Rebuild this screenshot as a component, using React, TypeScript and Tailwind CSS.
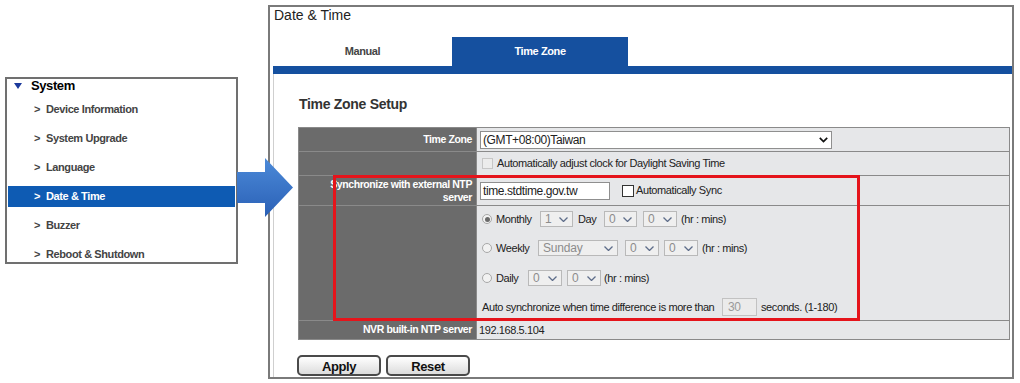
import React from 'react';

const menu = ['Device Information', 'System Upgrade', 'Language', 'Date & Time', 'Buzzer', 'Reboot & Shutdown'];

function Sel({ className, value }: { className: string; value: string }) {
  return (
    <div className={`relative h-[16px] border border-[#b9b9b9] bg-[#efefef] flex items-center pl-[4px] text-[12px] tracking-[-0.2px] text-[#8c8c8c] ${className}`}>
      <span>{value}</span>
      <svg className="absolute right-[4px] top-[5px]" width="9" height="5" viewBox="0 0 9 5">
        <path d="M0.5 0.5l4 4 4-4" stroke="#5e6d8a" strokeWidth="1.3" fill="none" />
      </svg>
    </div>
  );
}

function Radio({ checked }: { checked?: boolean }) {
  return (
    <span className="w-[10px] h-[10px] rounded-full border border-[#a8a8a8] bg-[#f2f2f2] flex items-center justify-center shrink-0">
      {checked && <span className="w-[5px] h-[5px] rounded-full bg-[#6a6a6a]" />}
    </span>
  );
}

export default function App() {
  return (
    <div className="w-[1020px] h-[383px] bg-white relative flex items-start overflow-hidden font-['Liberation_Sans',Arial,sans-serif] text-[#222]">
      {/* sidebar */}
      <div className="ml-[5px] mt-[77px] w-[233px] h-[187px] border-2 border-[#707070] flex flex-col">
        <div className="h-[13px] flex items-center">
          <span className="ml-[7px] mr-[9px] w-0 h-0 border-l-[4px] border-r-[4px] border-t-[6px] border-l-transparent border-r-transparent border-t-[#1c3a9c]" />
          <span className="text-[13px] font-bold tracking-[-0.4px] text-black">System</span>
        </div>
        <div className="mt-[7px] flex flex-col gap-[8px]">
          {menu.map(m => (
            <div
              key={m}
              className={`h-[21px] mx-px flex items-center text-[11px] font-bold tracking-[-0.4px] ${m === 'Date & Time' ? 'bg-[#0e5bb3] text-white' : 'text-[#444]'}`}
            >
              <span className="ml-[26px] w-[12px]">&gt;</span>
              <span>{m}</span>
            </div>
          ))}
        </div>
      </div>

      {/* pointer arrow */}
      <svg className="absolute left-[237px] top-[158px]" width="58" height="60" viewBox="0 0 58 60">
        <defs>
          <linearGradient id="ar" x1="0" y1="0" x2="0" y2="1">
            <stop offset="0" stopColor="#4c8ad8" />
            <stop offset="1" stopColor="#2a60b6" />
          </linearGradient>
        </defs>
        <path d="M0 14h28V0l28 29.5L28 59V45H0z" fill="url(#ar)" />
      </svg>

      {/* main panel */}
      <div className="ml-[30px] mt-[5px] w-[746px] h-[374px] border-2 border-[#7a7a7a] flex flex-col overflow-hidden">
        <div className="pl-[4px] h-[16px] leading-[16px] text-[14px] text-[#222]">Date &amp; Time</div>

        <div className="mt-[14px] ml-[3px] flex h-[29px] text-[11px] font-bold tracking-[-0.4px]">
          <div className="w-[179px] flex items-center justify-center text-[#444]">Manual</div>
          <div className="w-[176px] flex items-center justify-center bg-[#15509f] text-white">Time Zone</div>
        </div>
        <div className="ml-[3px] h-[8px] bg-[#15509f]" />

        <div className="ml-[3px] flex-1 border-l border-[#cfcfcf] pl-[24px] flex flex-col">
          <div className="mt-[22px] ml-px h-[16px] leading-[16px] text-[14px] font-bold tracking-[-0.3px] text-[#333]">Time Zone Setup</div>

          <div className="relative mt-[15px] w-[712px] border border-[#8a8a8a] bg-[#e6e7e9] text-[11px] tracking-[-0.4px]">
            {/* row 1 */}
            <div className="flex h-[24px] border-b border-[#8a8a8a]">
              <div className="w-[178px] bg-[#6b6b6b] border-r border-[#8a8a8a] flex items-center justify-end pr-[4px] text-white font-bold text-[10.5px]">Time Zone</div>
              <div className="flex-1 flex items-center pl-[3px]">
                <div className="relative w-[352px] h-[18px] border border-[#8f8f8f] bg-white flex items-center pl-[2px] text-[12px]">
                  (GMT+08:00)Taiwan
                  <svg className="absolute right-[3px] top-[5px]" width="9" height="6" viewBox="0 0 9 6">
                    <path d="M0.8 0.8l3.7 3.7 3.7-3.7" stroke="#111" strokeWidth="1.7" fill="none" />
                  </svg>
                </div>
              </div>
            </div>
            {/* row 2 */}
            <div className="flex h-[24px] border-b border-[#8a8a8a]">
              <div className="w-[178px] bg-[#6b6b6b] border-r border-[#8a8a8a]" />
              <div className="flex-1 flex items-center pl-[5px]">
                <span className="w-[11px] h-[11px] border border-[#c6c6c6] bg-[#ececec] mr-[4px]" />
                <span>Automatically adjust clock for Daylight Saving Time</span>
              </div>
            </div>
            {/* row 3 */}
            <div className="flex h-[30px] border-b border-[#8a8a8a]">
              <div className="w-[178px] bg-[#6b6b6b] border-r border-[#8a8a8a] flex items-center justify-end pr-[4px] text-white font-bold text-[10.5px] leading-[13px] text-right whitespace-nowrap overflow-hidden">
                <span>Synchronize with external NTP<br />server</span>
              </div>
              <div className="flex-1 flex items-center pl-[3px]">
                <div className="w-[130px] h-[18px] border border-[#8f8f8f] bg-white flex items-center pl-[2px] text-[12px]">time.stdtime.gov.tw</div>
                <span className="ml-[12px] w-[12px] h-[12px] border border-[#333] bg-white mr-[2px]" />
                <span>Automatically Sync</span>
              </div>
            </div>
            {/* row 4 */}
            <div className="flex h-[115px] border-b border-[#8a8a8a]">
              <div className="w-[178px] bg-[#6b6b6b] border-r border-[#8a8a8a]" />
              <div className="flex-1 flex flex-col pt-[3px] pl-[5px]">
                <div className="h-[20px] flex items-center">
                  <Radio checked />
                  <span className="ml-[4px] w-[44px]">Monthly</span>
                  <Sel className="w-[33px]" value="1" />
                  <span className="ml-[5px] w-[26px]">Day</span>
                  <Sel className="w-[33px]" value="0" />
                  <Sel className="ml-[6px] w-[34px]" value="0" />
                  <span className="ml-[4px]">(hr : mins)</span>
                </div>
                <div className="mt-[9px] h-[20px] flex items-center">
                  <Radio />
                  <span className="ml-[4px] w-[42px]">Weekly</span>
                  <Sel className="w-[80px]" value="Sunday" />
                  <Sel className="ml-[7px] w-[34px]" value="0" />
                  <Sel className="ml-[5px] w-[34px]" value="0" />
                  <span className="ml-[4px]">(hr : mins)</span>
                </div>
                <div className="mt-[10px] h-[20px] flex items-center">
                  <Radio />
                  <span className="ml-[4px] w-[32px]">Daily</span>
                  <Sel className="w-[34px]" value="0" />
                  <Sel className="ml-[5px] w-[34px]" value="0" />
                  <span className="ml-[3px]">(hr : mins)</span>
                </div>
                <div className="mt-[9px] h-[20px] flex items-center">
                  <span className="w-[240px]">Auto synchronize when time difference is more than</span>
                  <div className="w-[35px] h-[18px] border border-[#c2c2c2] bg-[#ebebeb] flex items-center pl-[5px] text-[12px] text-[#9a9a9a]">30</div>
                  <span className="ml-[4px]">seconds. (1-180)</span>
                </div>
              </div>
            </div>
            {/* row 5 */}
            <div className="flex h-[18px]">
              <div className="w-[178px] bg-[#6b6b6b] border-r border-[#8a8a8a] flex items-center justify-end pr-[4px] text-white font-bold text-[10.5px]">NVR built-in NTP server</div>
              <div className="flex-1 flex items-center pl-[2px]">192.168.5.104</div>
            </div>

            {/* highlight frame */}
            <div className="absolute left-[34px] top-[47px] w-[527px] h-[146px] border-[3px] border-[#e5141b]" />
          </div>

          <div className="mt-[15px] -ml-px flex gap-[5px]">
            <button className="w-[84px] h-[21px] rounded-[5px] border-2 border-[#4a4a4a] bg-gradient-to-b from-white to-[#dcdcdc] text-[13px] font-bold tracking-[-0.4px] text-[#111]">Apply</button>
            <button className="w-[84px] h-[21px] rounded-[5px] border-2 border-[#4a4a4a] bg-gradient-to-b from-white to-[#dcdcdc] text-[13px] font-bold tracking-[-0.4px] text-[#111]">Reset</button>
          </div>
        </div>
      </div>
    </div>
  );
}
